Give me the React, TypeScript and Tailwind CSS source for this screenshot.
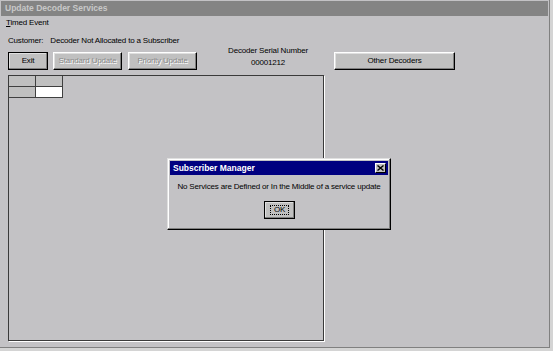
const btn =
  "h-[18px] flex items-center justify-center bg-[#c0c0c0] border border-t-white border-l-white border-b-black border-r-black shadow-[inset_-1px_-1px_#808080,inset_1px_1px_#dfdfdf]";

const disabledText = "text-[#8a8a8a] [text-shadow:1px_1px_0_#ffffff]";

const GridCell = ({ white }: { white?: boolean }) => (
  <div className={`w-[27px] h-[11px] border-r border-b border-[#404040] ${white ? "bg-white" : "bg-[#c0c0c0]"}`} />
);

const App = () => {
  return (
    <div className="w-[553px] h-[351px] bg-[#d4d4d4] font-['Liberation_Sans',Arial,sans-serif] text-[8px] tracking-[-0.18px] text-black relative overflow-hidden">
      <div className="w-[550px] h-[348px] bg-[#c3c2c5] border-r border-b border-r-[#808080] border-b-[#808080] flex flex-col">
        {/* title bar */}
        <div className="h-[15px] mx-[1px] mt-[1px] bg-[#848484] text-[#c8c8c8] font-bold text-[8.5px] tracking-normal flex items-center pl-[4px]">
          Update Decoder Services
        </div>

        {/* menu */}
        <div className="h-[14px] flex items-center pl-[6px]">
          <span>
            <span className="underline">T</span>imed Event
          </span>
        </div>

        {/* customer */}
        <div className="h-[15px] mt-[3px] flex items-center pl-[8px] gap-[7px]">
          <span>Customer:</span>
          <span>Decoder Not Allocated to a Subscriber</span>
        </div>

        {/* buttons row */}
        <div className="flex items-start pl-[8px] h-[30px] -mt-[3px]">
          <div className={`${btn} w-[40px] mt-[7px] outline outline-1 outline-black -outline-offset-1`}>Exit</div>
          <div className={`${btn} w-[69px] ml-[5px] mt-[7px] ${disabledText}`}>Standard Update</div>
          <div className={`${btn} w-[69px] ml-[6px] mt-[7px] ${disabledText}`}>Priority Update</div>
          <div className="w-[100px] ml-[21px] flex flex-col items-center leading-[12px]">
            <span>Decoder Serial Number</span>
            <span>00001212</span>
          </div>
          <div className={`${btn} w-[121px] ml-[16px] mt-[7px]`}>Other Decoders</div>
        </div>

        {/* grid panel */}
        <div className="ml-[8px] w-[316px] h-[266px] border border-[#3a3a3a] shadow-[1px_1px_0_#ffffff] bg-[#c3c2c5]">
          <div className="flex">
            <GridCell />
            <GridCell />
          </div>
          <div className="flex">
            <GridCell />
            <GridCell white />
          </div>
        </div>
      </div>

      {/* message dialog */}
      <div className="absolute left-[167px] top-[158px] w-[224px] h-[72px] bg-[#c3c2c5] border border-t-[#dfdfdf] border-l-[#dfdfdf] border-b-black border-r-black shadow-[inset_-1px_-1px_#808080,inset_1px_1px_#ffffff] p-[2px] flex flex-col">
        <div className="h-[14px] bg-[#000080] text-white font-bold text-[8.5px] tracking-normal flex items-center justify-between pl-[3px] pr-[2px]">
          <span>Subscriber Manager</span>
          <div className="w-[11px] h-[10px] bg-[#c0c0c0] border border-t-white border-l-white border-b-black border-r-black flex items-center justify-center">
            <svg width="7" height="6" viewBox="0 0 7 6">
              <path d="M0.5 0.5 L6.5 5.5 M6.5 0.5 L0.5 5.5" stroke="black" strokeWidth="1.4" />
            </svg>
          </div>
        </div>
        <div className="text-center mt-[7px] leading-[10px]">
          No Services are Defined or In the Middle of a service update
        </div>
        <div className="flex justify-center mt-[9px]">
          <div className={`${btn} w-[31px] h-[16px] outline outline-1 outline-black -outline-offset-1 pl-[1px]`}>
            <span className="border border-dotted border-black px-[3px] leading-[8px]">OK</span>
          </div>
        </div>
      </div>
    </div>
  );
};

export default App;
